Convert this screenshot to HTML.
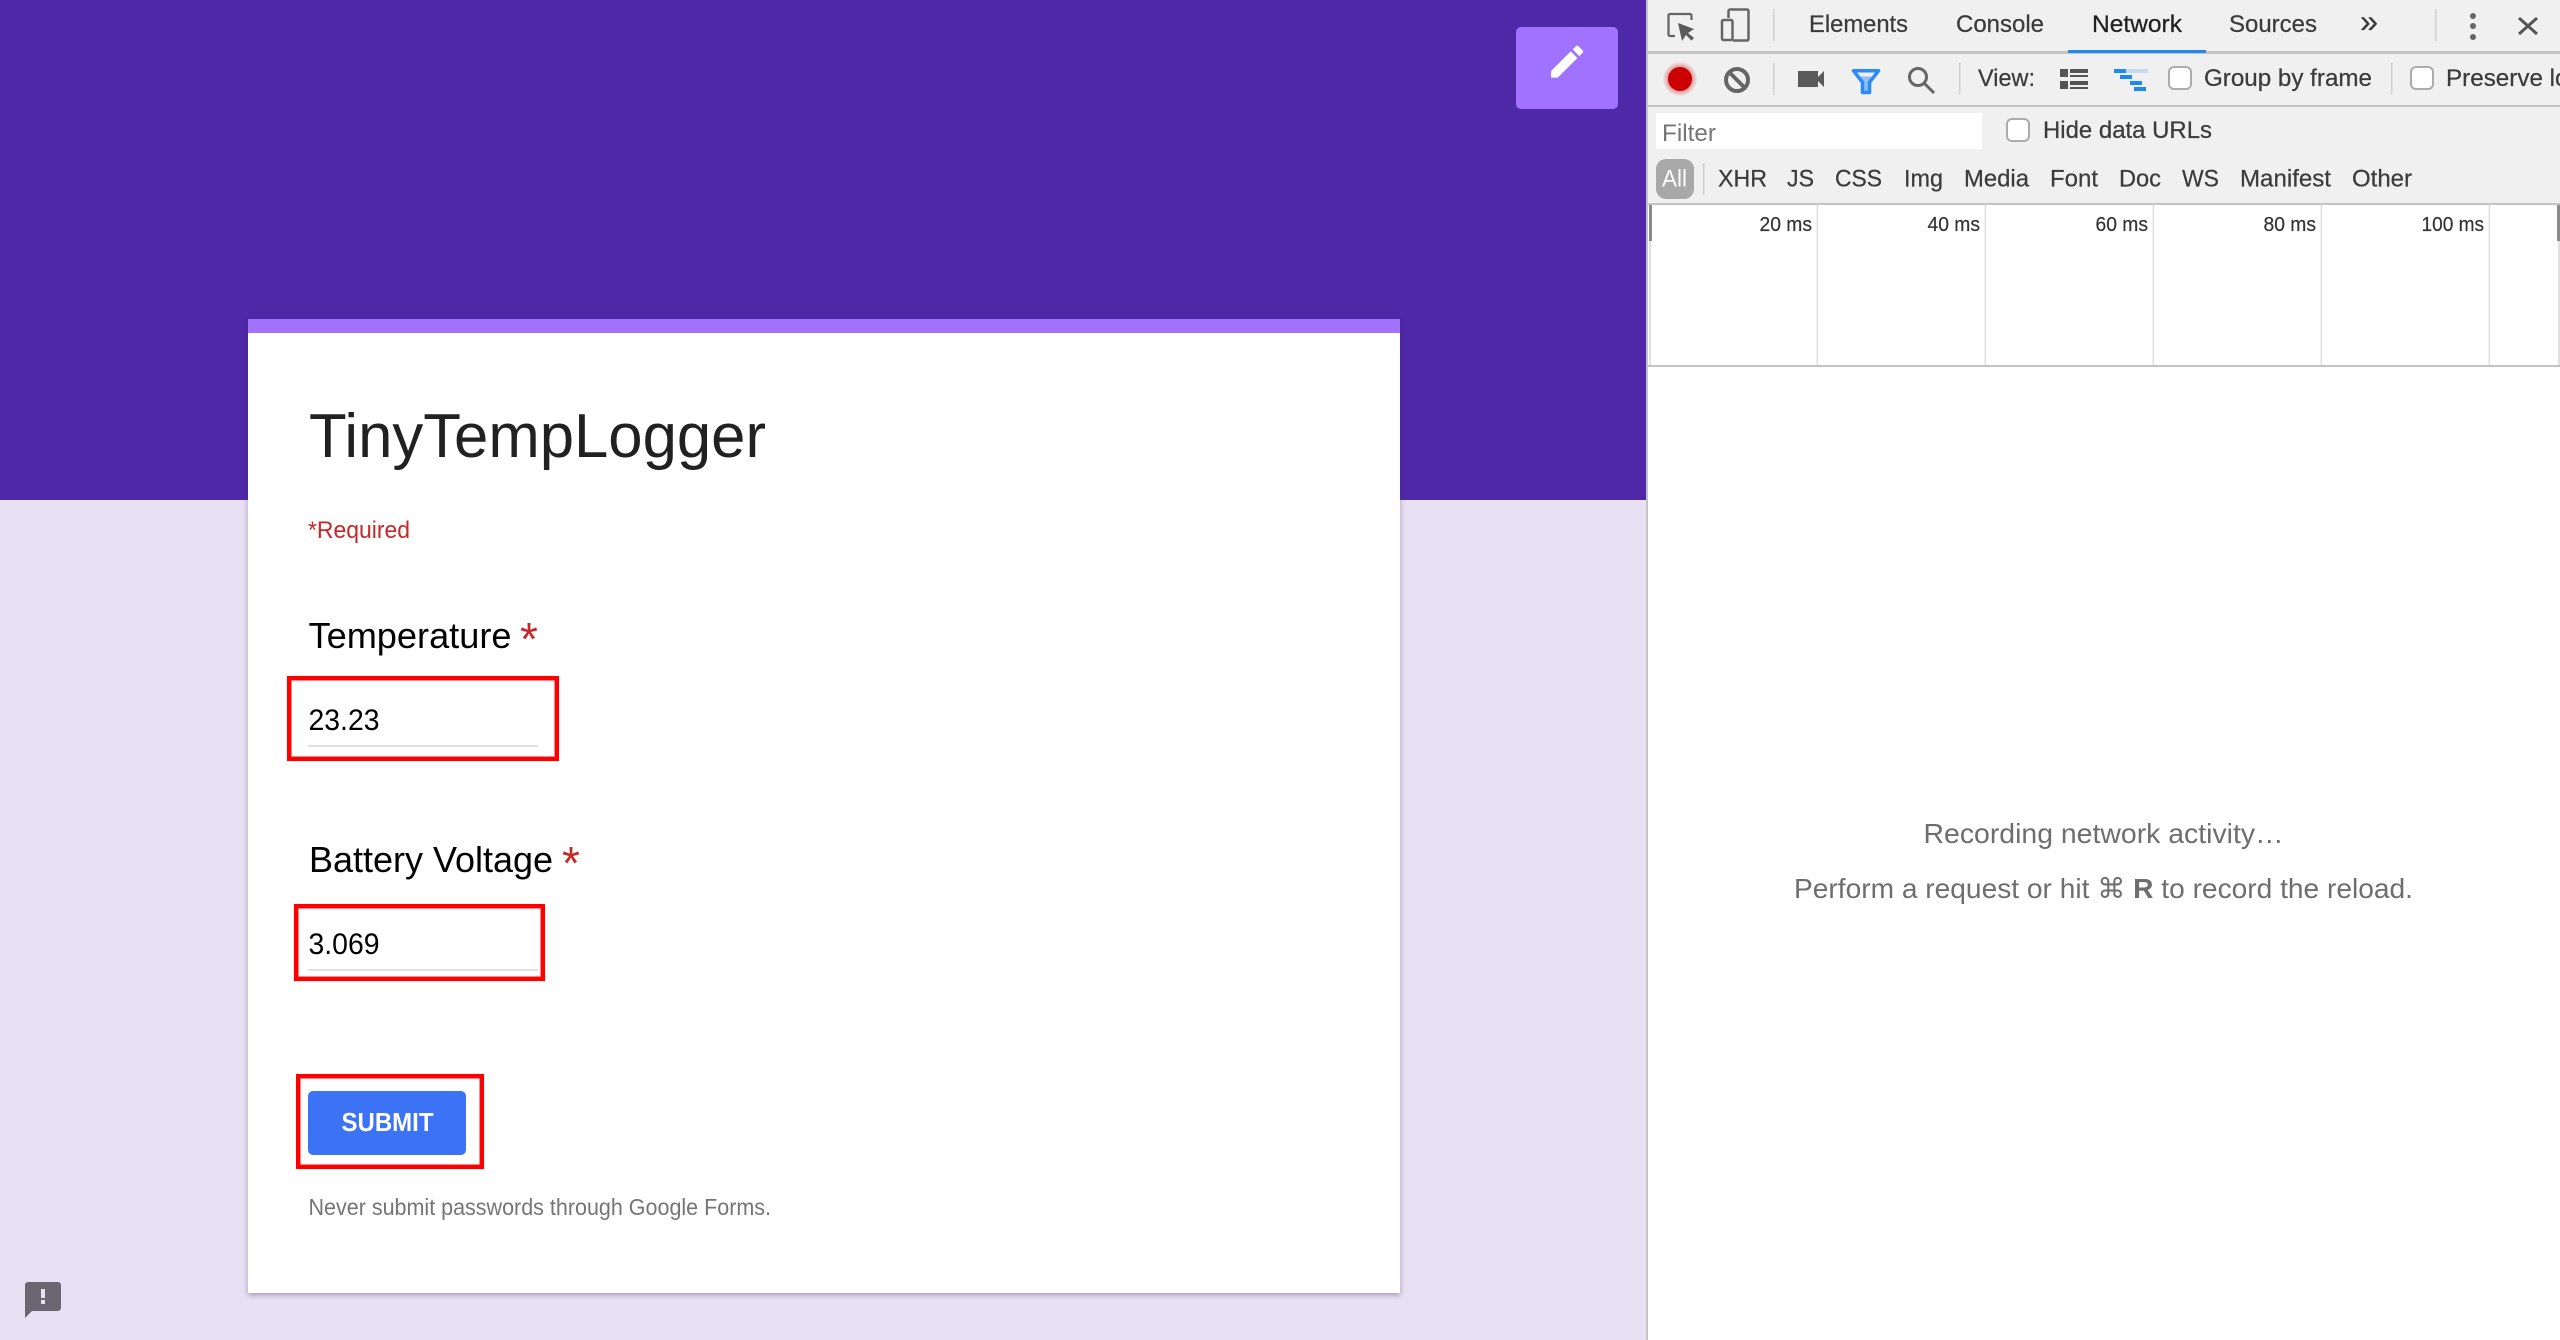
<!DOCTYPE html>
<html lang="en">
<head>
<meta charset="utf-8">
<title>TinyTempLogger</title>
<style>
html,body{margin:0;padding:0;width:2560px;height:1340px;overflow:hidden;background:#e8e0f3}
svg{display:block;position:absolute;left:0;top:0}
#bg{position:absolute;left:0;top:0;width:1646px;height:1340px;background:#e8e0f3}
#hdr{position:absolute;left:0;top:0;width:1646px;height:500px;background:#4f28a8}
#card{position:absolute;left:248px;top:319px;width:1152px;height:974px;background:#fff;box-shadow:0 2px 5px rgba(60,40,100,.4)}
#card i{display:block;height:14px;background:#a072ff}
#edit{position:absolute;left:1516px;top:27px;width:102px;height:82px;background:#a072ff;border-radius:5px}
#dev{position:absolute;left:1646px;top:0;width:914px;height:1340px;background:#fff;border-left:2px solid #c4c4c4;box-sizing:border-box}
#bar{position:absolute;left:0;top:0;width:912px;height:204px;background:#f0f0f0}
text{font-family:"Liberation Sans",Arial,sans-serif}
.d{font-size:24px;fill:#3c3c3c;stroke:#3c3c3c;stroke-width:.25}
.t{font-size:20px;fill:#333;stroke:#333;stroke-width:.2}
</style>
</head>
<body>
<div id="bg"></div>
<div id="hdr"></div>
<div id="card"><i></i></div>
<div id="edit"></div>
<div id="dev"><div id="bar"></div></div>
<svg width="2560" height="1340" viewBox="0 0 2560 1340" xmlns="http://www.w3.org/2000/svg">
<defs>
<radialGradient id="glow"><stop offset="65%" stop-color="#cc0000" stop-opacity=".4"/><stop offset="100%" stop-color="#cc0000" stop-opacity="0"/></radialGradient>
</defs>

<!-- form -->
<path fill="#fff" transform="translate(1545.7 40.300) scale(1.78)" d="M3 17.25V21h3.75L17.81 9.94l-3.75-3.75L3 17.25zM20.71 7.04c.39-.39.39-1.02 0-1.41l-2.34-2.34c-.39-.39-1.02-.39-1.41 0l-1.83 1.83 3.75 3.75 1.83-1.83z"/>

<text x="309" y="457" font-size="62" fill="#212121" textLength="457" lengthAdjust="spacingAndGlyphs">TinyTempLogger</text>
<text x="308" y="538" font-size="24" fill="#c62828" textLength="102" lengthAdjust="spacingAndGlyphs">*Required</text>

<text x="308.5" y="648" font-size="36" fill="#000" textLength="203" lengthAdjust="spacingAndGlyphs">Temperature</text>
<text x="520" y="655" font-size="46" fill="#c62828">*</text>
<text x="308.5" y="730" font-size="30" fill="#000" textLength="71" lengthAdjust="spacingAndGlyphs">23.23</text>
<rect x="308" y="745" width="230" height="2" fill="#e0e0e0"/>
<rect x="289.2" y="678.2" width="267.6" height="80.6" fill="none" stroke="#f00" stroke-width="4.500"/>

<text x="309" y="872" font-size="36" fill="#000" textLength="244" lengthAdjust="spacingAndGlyphs">Battery Voltage</text>
<text x="562" y="879" font-size="46" fill="#c62828">*</text>
<text x="308.5" y="954" font-size="30" fill="#000" textLength="71" lengthAdjust="spacingAndGlyphs">3.069</text>
<rect x="308" y="969" width="230" height="2" fill="#e0e0e0"/>
<rect x="296.2" y="906.2" width="246.6" height="72.6" fill="none" stroke="#f00" stroke-width="4.500"/>

<rect x="308" y="1091" width="158" height="64" rx="5" fill="#3b72f6"/>
<text x="341.5" y="1131" font-size="26" font-weight="700" fill="#fff" textLength="92" lengthAdjust="spacingAndGlyphs">SUBMIT</text>
<rect x="298.200" y="1076.200" width="183.600" height="90.600" fill="none" stroke="#f00" stroke-width="4.500"/>
<text x="308.5" y="1215" font-size="23" fill="#757575" textLength="462.500" lengthAdjust="spacingAndGlyphs">Never submit passwords through Google Forms.</text>

<!-- feedback -->
<path fill="#6b6672" d="M28 1282h30a3 3 0 0 1 3 3v23a3 3 0 0 1-3 3H32l-7 7v-33a3 3 0 0 1 3-3z"/>
<rect x="41" y="1289" width="4" height="9" fill="#e8e0f3"/>
<rect x="41" y="1300" width="4" height="4" fill="#e8e0f3"/>

<!-- devtools lines -->
<rect x="1648" y="51" width="912" height="3" fill="#c4c4c4"/>
<rect x="1648" y="105" width="912" height="2" fill="#c4c4c4"/>
<rect x="1648" y="203" width="912" height="2" fill="#c4c4c4"/>
<rect x="2068" y="50" width="138" height="3" fill="#1e88f5"/>
<g fill="#cfcfcf">
<rect x="1773" y="9" width="1.500" height="32"/>
<rect x="2435" y="9" width="1.500" height="32"/>
<rect x="1773" y="63" width="1.500" height="32"/>
<rect x="1959" y="63" width="1.500" height="32"/>
<rect x="2391" y="63" width="1.500" height="32"/>
<rect x="1703" y="163" width="1.500" height="32"/>
</g>

<!-- inspect -->
<path d="M1675 36h-5a1.500 1.500 0 0 1-1.500-1.500V15.500A1.500 1.500 0 0 1 1670 14h20a1.500 1.500 0 0 1 1.500 1.500V20" fill="none" stroke="#666" stroke-width="2.300"/>
<path fill="#5a5a5a" d="M1678 23l16 6-6 4 6 5-2.500 2.500-5.500-5.500-4 6z"/>
<!-- device -->
<path d="M1728.500 18v-7a1.500 1.500 0 0 1 1.500-1.500h17a1.500 1.500 0 0 1 1.500 1.500v28a1.500 1.500 0 0 1-1.500 1.500h-14" fill="none" stroke="#666" stroke-width="2.500"/>
<rect x="1722" y="20" width="10.500" height="20" rx="1.500" fill="none" stroke="#666" stroke-width="2.500"/>

<!-- tabs -->
<text x="1809" y="32" class="d" textLength="99" lengthAdjust="spacingAndGlyphs">Elements</text>
<text x="1956" y="32" class="d" textLength="88" lengthAdjust="spacingAndGlyphs">Console</text>
<text x="2092" y="32" class="d" style="fill:#222;stroke:#222" textLength="90" lengthAdjust="spacingAndGlyphs">Network</text>
<text x="2229" y="32" class="d" textLength="88" lengthAdjust="spacingAndGlyphs">Sources</text>
<text x="2360" y="32" class="d" style="font-size:32px" textLength="18" lengthAdjust="spacingAndGlyphs">»</text>
<g fill="#666"><circle cx="2473" cy="16" r="3"/><circle cx="2473" cy="26" r="3"/><circle cx="2473" cy="37" r="3"/></g>
<path d="M2519 18l18 16M2537 18l-18 16" stroke="#555" stroke-width="3" fill="none"/>

<!-- row 2 -->
<circle cx="1680" cy="79" r="17.500" fill="url(#glow)"/>
<circle cx="1680" cy="79" r="12" fill="#cc0000"/>
<circle cx="1737" cy="80" r="11" fill="none" stroke="#666" stroke-width="4"/>
<path d="M1729.500 72.500l15 15" stroke="#666" stroke-width="4"/>
<path fill="#5a5a5a" d="M1798 71h20v16h-20zM1818 77l6-6v16l-6-6z"/>
<path d="M1858 76.500h16l-5 6v10h-6v-10z" fill="#90bdf5"/>
<path d="M1853.500 70.800h25l-9 11.500v10.200h-7v-10.200z" fill="none" stroke="#2a8bf5" stroke-width="3.500" stroke-linejoin="round"/>
<circle cx="1918" cy="77" r="8.500" fill="none" stroke="#666" stroke-width="3"/>
<path d="M1924.500 83.500l9.500 9.500" stroke="#666" stroke-width="3"/>
<text x="1978" y="86" class="d" textLength="57" lengthAdjust="spacingAndGlyphs">View:</text>
<g fill="#555">
<rect x="2060" y="69" width="8" height="8"/><rect x="2060" y="81" width="8" height="8"/>
<rect x="2070" y="69" width="18" height="4"/><rect x="2070" y="75" width="18" height="2"/>
<rect x="2070" y="81" width="18" height="4"/><rect x="2070" y="87" width="18" height="2"/>
</g>
<rect x="2114" y="69" width="34" height="4" fill="#c6d9f3"/>
<g fill="#1e88f5">
<rect x="2114" y="69" width="12" height="4"/><rect x="2120" y="75" width="12" height="4"/>
<rect x="2130" y="81" width="12" height="4"/><rect x="2134" y="87" width="12" height="4"/>
</g>
<g fill="#fff" stroke="#ababab" stroke-width="2">
<rect x="2169" y="67" width="22" height="22" rx="5"/>
<rect x="2411" y="67" width="22" height="22" rx="5"/>
<rect x="2007" y="119" width="22" height="22" rx="5"/>
</g>
<text x="2204" y="86" class="d" textLength="168" lengthAdjust="spacingAndGlyphs">Group by frame</text>
<text x="2446" y="86" class="d" textLength="136" lengthAdjust="spacingAndGlyphs">Preserve log</text>

<!-- row 3 -->
<rect x="1656" y="113" width="326" height="36" fill="#fff"/>
<text x="1662" y="141" font-size="24" fill="#757575" textLength="54" lengthAdjust="spacingAndGlyphs">Filter</text>
<text x="2043" y="138" class="d" textLength="169" lengthAdjust="spacingAndGlyphs">Hide data URLs</text>

<!-- row 4 -->
<rect x="1656" y="159" width="38" height="40" rx="10" fill="#a8a8a8"/>
<text x="1662" y="186.500" font-size="24" fill="#fff" textLength="25" lengthAdjust="spacingAndGlyphs">All</text>
<text x="1718" y="186.500" class="d" textLength="49" lengthAdjust="spacingAndGlyphs">XHR</text>
<text x="1787" y="186.500" class="d" textLength="27" lengthAdjust="spacingAndGlyphs">JS</text>
<text x="1835" y="186.500" class="d" textLength="47" lengthAdjust="spacingAndGlyphs">CSS</text>
<text x="1904" y="186.500" class="d" textLength="39" lengthAdjust="spacingAndGlyphs">Img</text>
<text x="1964" y="186.500" class="d" textLength="65" lengthAdjust="spacingAndGlyphs">Media</text>
<text x="2050" y="186.500" class="d" textLength="48" lengthAdjust="spacingAndGlyphs">Font</text>
<text x="2119" y="186.500" class="d" textLength="42" lengthAdjust="spacingAndGlyphs">Doc</text>
<text x="2182" y="186.500" class="d" textLength="37" lengthAdjust="spacingAndGlyphs">WS</text>
<text x="2240" y="186.500" class="d" textLength="91" lengthAdjust="spacingAndGlyphs">Manifest</text>
<text x="2352" y="186.500" class="d" textLength="60" lengthAdjust="spacingAndGlyphs">Other</text>

<!-- timeline -->
<g fill="#e0e0e0">
<rect x="1816.500" y="205" width="1.500" height="160"/>
<rect x="1984.500" y="205" width="1.500" height="160"/>
<rect x="2152.500" y="205" width="1.500" height="160"/>
<rect x="2320.500" y="205" width="1.500" height="160"/>
<rect x="2488.500" y="205" width="1.500" height="160"/>
</g>
<rect x="1648" y="365" width="912" height="2" fill="#c4c4c4"/>
<rect x="1649" y="205" width="3" height="36" fill="#8a8a8a"/>
<rect x="2557" y="205" width="3" height="36" fill="#8a8a8a"/>
<rect x="1649" y="241" width="2" height="124" fill="#e0e0e0"/>
<rect x="2558" y="241" width="2" height="124" fill="#e0e0e0"/>
<text x="1759.500" y="231" class="t" textLength="52.500" lengthAdjust="spacingAndGlyphs">20 ms</text>
<text x="1927.500" y="231" class="t" textLength="52.500" lengthAdjust="spacingAndGlyphs">40 ms</text>
<text x="2095.500" y="231" class="t" textLength="52.500" lengthAdjust="spacingAndGlyphs">60 ms</text>
<text x="2263.500" y="231" class="t" textLength="52.500" lengthAdjust="spacingAndGlyphs">80 ms</text>
<text x="2421.500" y="231" class="t" textLength="62.500" lengthAdjust="spacingAndGlyphs">100 ms</text>

<!-- message -->
<text x="1923.500" y="843" font-size="28" fill="#6e6e6e" textLength="360" lengthAdjust="spacingAndGlyphs">Recording network activity…</text>
<text x="1794" y="898" font-size="28" fill="#6e6e6e" textLength="619" lengthAdjust="spacingAndGlyphs">Perform a request or hit <tspan font-family="'DejaVu Sans'">⌘</tspan> <tspan font-weight="700">R</tspan> to record the reload.</text>
</svg>
</body>
</html>
